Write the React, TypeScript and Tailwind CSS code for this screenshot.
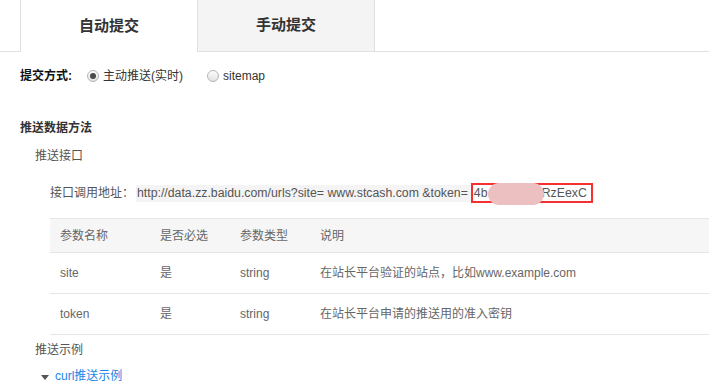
import React from "react";

const font = { fontFamily: '"Liberation Sans", Arial, "Noto Sans CJK SC", sans-serif' };

const rows = [
  { name: "site", required: "是", type: "string", desc: "在站长平台验证的站点，比如www.example.com" },
  { name: "token", required: "是", type: "string", desc: "在站长平台申请的推送用的准入密钥" },
];

function Radio({ checked }: { checked?: boolean }) {
  return (
    <span className="inline-flex h-[12px] w-[12px] items-center justify-center rounded-full border border-[#b5b5b5] bg-gradient-to-b from-[#fdfdfd] to-[#e2e2e2]">
      {checked && <span className="h-[6px] w-[6px] rounded-full bg-[#4a4a4a]" />}
    </span>
  );
}

export default function App() {
  return (
    <div className="h-[382px] w-[709px] overflow-hidden bg-white text-[12px] text-[#666]" style={font}>
      {/* tabs */}
      <div className="flex h-[52px] border-b border-[#e0e0e0] pl-[20px]">
        <div className="flex w-[177px] items-center justify-center border-l border-[#e0e0e0] bg-white text-[15px] font-bold text-[#333] -mb-px">
          自动提交
        </div>
        <div className="flex w-[178px] items-center justify-center border-x border-[#e0e0e0] bg-[#f4f4f4] text-[15px] font-bold text-[#333]">
          手动提交
        </div>
      </div>

      {/* submit mode */}
      <div className="ml-[20px] mt-[15px] flex h-[18px] items-center">
        <span className="font-bold text-[#111]">提交方式:</span>
        <span className="ml-[15px] flex items-center gap-[4px] text-[#333]">
          <Radio checked />
          主动推送(实时)
        </span>
        <span className="ml-[24px] flex items-center gap-[4px] text-[#333]">
          <Radio />
          sitemap
        </span>
      </div>

      <div className="ml-[20px] mt-[34px] font-bold text-[#333]">推送数据方法</div>
      <div className="ml-[35px] mt-[10px] text-[#555]">推送接口</div>

      {/* url */}
      <div className="ml-[50px] mt-[18px] flex h-[20px] items-center text-[#555]">
        <span>接口调用地址：</span>
        <span className="ml-[2px] flex h-[17px] items-center bg-[#f4f4f4] pl-[1px] text-[12.3px] text-[#555]">
          http://data.zz.baidu.com/urls?site= www.stcash.com &amp;token=
          <span className="relative ml-[3px] flex h-[20px] w-[122px] items-center border-2 border-[#f53030] bg-white pl-[1px] pr-[4px]">
            4b
            <span className="ml-auto">RzEexC</span>
            <span className="absolute left-[15px] top-[-2px] h-[22px] w-[56px] rounded-full bg-[#ecc0c0]" />
          </span>
        </span>
      </div>

      {/* table */}
      <div className="ml-[50px] mt-[15px] border-t border-[#e5e5e5]">
        <div className="flex h-[34px] items-center border-b border-[#e5e5e5] bg-[#f6f6f6] text-[#666]">
          <span className="w-[100px] pl-[10px]">参数名称</span>
          <span className="w-[80px] pl-[10px]">是否必选</span>
          <span className="w-[80px] pl-[10px]">参数类型</span>
          <span className="pl-[10px]">说明</span>
        </div>
        {rows.map((r) => (
          <div key={r.name} className="flex h-[41px] items-center border-b border-[#e5e5e5] text-[#666]">
            <span className="w-[100px] pl-[10px]">{r.name}</span>
            <span className="w-[80px] pl-[10px]">{r.required}</span>
            <span className="w-[80px] pl-[10px]">{r.type}</span>
            <span className="pl-[10px]">{r.desc}</span>
          </div>
        ))}
      </div>

      <div className="ml-[35px] mt-[6px] text-[#555]">推送示例</div>
      <div className="ml-[41px] mt-[8px] flex items-center gap-[6px] text-[#1a85e8]">
        <svg width="8" height="5" viewBox="0 0 8 5" className="mt-[3px]">
          <path d="M0 0h8L4 5z" fill="#555" />
        </svg>
        curl推送示例
      </div>
    </div>
  );
}
